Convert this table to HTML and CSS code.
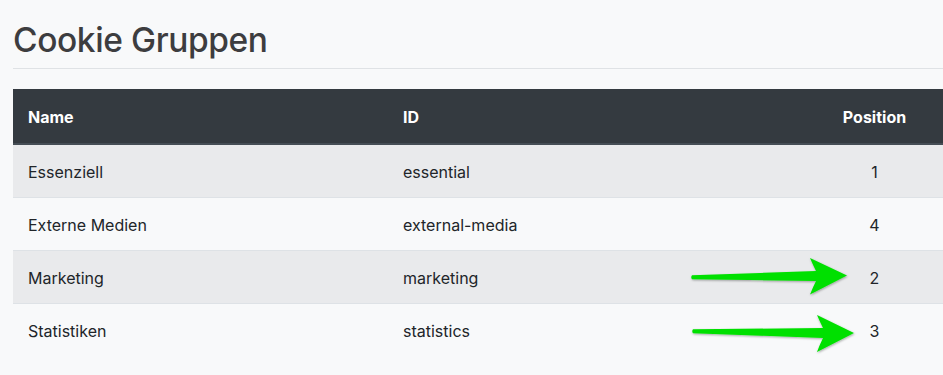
FILE: index.html
```html
<!DOCTYPE html>
<html lang="de">
<head>
<meta charset="utf-8">
<title>Cookie Gruppen</title>
<link rel="stylesheet" href="styles.css">
</head>
<body>
<main class="page">
  <h1 class="title">Cookie Gruppen</h1>
  <hr class="divider">
  <div class="table-wrap">
    <table class="groups">
      <colgroup>
        <col class="col-name">
        <col class="col-id">
        <col class="col-pos">
      </colgroup>
      <thead>
        <tr><th>Name</th><th>ID</th><th class="pos">Position</th></tr>
      </thead>
      <tbody>
        <tr><td>Essenziell</td><td>essential</td><td class="pos">1</td></tr>
        <tr><td>Externe Medien</td><td>external-media</td><td class="pos">4</td></tr>
        <tr><td>Marketing</td><td>marketing</td><td class="pos">2</td></tr>
        <tr><td>Statistiken</td><td>statistics</td><td class="pos">3</td></tr>
      </tbody>
    </table>
    <svg class="arrows" width="943" height="375" viewBox="0 0 943 375" aria-hidden="true">
      <defs>
        <filter id="sh" x="-10%" y="-30%" width="120%" height="160%">
          <feDropShadow dx="0.6" dy="1" stdDeviation="0.8" flood-color="#000" flood-opacity="0.35"/>
        </filter>
      </defs>
      <path filter="url(#sh)" fill="#05e005" d="M692 275.2 L816 271 Q813 265 810 258 L847 275.5 L810 294.5 Q813 287 816 281 L692 279.3 Q690.5 277.2 692 275.2 Z"/>
      <path filter="url(#sh)" fill="#05e005" d="M693 329.3 L823 328 Q820 322 817 315 L854 333 L817 352 Q820 344 823 338 L693 333.3 Q691.5 331.3 693 329.3 Z"/>
    </svg>
  </div>
</main>
</body>
</html>
```
FILE: styles.css
```css
html, body {
  margin: 0;
  padding: 0;
  background: #f8f9fa;
}
body {
  font-family: Inter, "Liberation Sans", sans-serif;
  color: #212529;
  width: 943px;
  height: 375px;
  overflow: hidden;
}
.page {
  padding: 0 0 0 13px;
}
.title {
  margin: 0;
  padding-top: 19px;
  font-size: 33.5px;
  font-weight: 500;
  line-height: 42px;
  color: #3d3d3f;
  letter-spacing: -0.4px;
}
.divider {
  margin: 7px 0 0 0;
  border: 0;
  border-top: 1px solid #dfe2e5;
  height: 0;
}
.table-wrap {
  margin-top: 20px;
  position: relative;
}
.groups {
  width: 930px;
  border-collapse: collapse;
  table-layout: fixed;
  font-size: 16px;
  line-height: 24px;
}
.col-name { width: 375px; }
.col-id { width: 418px; }
.col-pos { width: 137px; }
.groups th {
  background: #343a40;
  color: #fff;
  font-weight: 700;
  text-align: left;
  padding: 16px 15px 14px;
  border-bottom: 2px solid #454d55;
}
.groups td {
  padding: 15px 15px 13px;
  border-top: 1px solid #dee2e6;
}
.groups tbody tr:first-child td {
  border-top: 0;
}
.groups tbody tr:nth-child(odd) td {
  background: #e9eaec;
}
.groups .pos {
  text-align: center;
}
.arrows {
  position: absolute;
  left: -13px;
  top: -89px;
  pointer-events: none;
}
```
